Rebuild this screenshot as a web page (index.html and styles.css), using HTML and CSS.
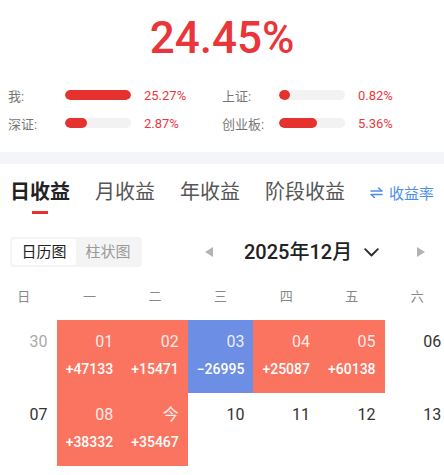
FILE: index.html
```html
<!DOCTYPE html>
<html lang="zh-CN">
<head>
<meta charset="utf-8">
<title>收益</title>
<link rel="stylesheet" href="styles.css">
</head>
<body>
<div class="page">
  <div class="hero">24.45%</div>

  <div class="stats">
    <div class="stat"><span class="stat-label">我:</span><span class="bar"><span class="bar-fill" style="width:100%"></span></span><span class="stat-val">25.27%</span></div>
    <div class="stat"><span class="stat-label">上证:</span><span class="bar"><span class="bar-fill" style="width:16%"></span></span><span class="stat-val">0.82%</span></div>
    <div class="stat"><span class="stat-label">深证:</span><span class="bar"><span class="bar-fill" style="width:34%"></span></span><span class="stat-val">2.87%</span></div>
    <div class="stat"><span class="stat-label">创业板:</span><span class="bar"><span class="bar-fill" style="width:57%"></span></span><span class="stat-val">5.36%</span></div>
  </div>

  <div class="band"></div>

  <div class="tabs">
    <div class="tab active">日收益</div>
    <div class="tab">月收益</div>
    <div class="tab">年收益</div>
    <div class="tab">阶段收益</div>
    <div class="tab-switch">
      <svg class="switch-icon" width="13" height="11" viewBox="0 0 13 11"><path d="M1 4 H12 L8.5 1" fill="none" stroke="#4d8fe6" stroke-width="1.5" stroke-linecap="round" stroke-linejoin="round"/><path d="M12 7.5 H1 L4.5 10.5" fill="none" stroke="#4d8fe6" stroke-width="1.5" stroke-linecap="round" stroke-linejoin="round"/></svg>
      <span>收益率</span>
    </div>
  </div>

  <div class="toolbar">
    <div class="toggle">
      <div class="seg seg-on">日历图</div>
      <div class="seg">柱状图</div>
    </div>
    <div class="month">
      <svg class="arrow arrow-left" width="8" height="10" viewBox="0 0 8 10"><polygon points="8,0 8,10 0,5" fill="#b3b3b3"/></svg>
      <span class="month-text">2025年12月</span>
      <svg class="chev" width="15" height="9" viewBox="0 0 15 9"><polyline points="1.2,1.2 7.5,7.5 13.8,1.2" fill="none" stroke="#2b2b2b" stroke-width="1.9" stroke-linecap="round" stroke-linejoin="round"/></svg>
      <svg class="arrow arrow-right" width="8" height="10" viewBox="0 0 8 10"><polygon points="0,0 0,10 8,5" fill="#b3b3b3"/></svg>
    </div>
  </div>

  <div class="weekdays">
    <div>日</div><div>一</div><div>二</div><div>三</div><div>四</div><div>五</div><div>六</div>
  </div>

  <div class="cal">
    <div class="cell"><div class="num muted">30</div></div>
    <div class="cell up"><div class="num">01</div><div class="val">+47133</div></div>
    <div class="cell up"><div class="num">02</div><div class="val">+15471</div></div>
    <div class="cell down"><div class="num">03</div><div class="val">−26995</div></div>
    <div class="cell up"><div class="num">04</div><div class="val">+25087</div></div>
    <div class="cell up"><div class="num">05</div><div class="val">+60138</div></div>
    <div class="cell"><div class="num">06</div></div>

    <div class="cell"><div class="num">07</div></div>
    <div class="cell up"><div class="num">08</div><div class="val">+38332</div></div>
    <div class="cell up"><div class="num">今</div><div class="val">+35467</div></div>
    <div class="cell"><div class="num">10</div></div>
    <div class="cell"><div class="num">11</div></div>
    <div class="cell"><div class="num">12</div></div>
    <div class="cell"><div class="num">13</div></div>
  </div>
</div>
</body>
</html>
```

FILE: styles.css
```css
* { box-sizing: border-box; }
html, body { margin: 0; padding: 0; background: #fff; }
body {
  font-family: Roboto, "Noto Sans CJK SC", sans-serif;
  width: 444px;
  height: 475px;
  overflow: hidden;
}
.page { width: 444px; overflow: hidden; }

.hero {
  padding-top: 16px;
  font-size: 44px;
  line-height: 44px;
  font-weight: 500;
  color: #e8363b;
  text-align: center;
}

.stats {
  margin-top: 25px;
  padding: 0 0 19px 8px;
  display: grid;
  grid-template-columns: 214px 214px;
  row-gap: 8px;
}
.stat {
  display: flex;
  align-items: center;
  height: 20px;
  font-size: 13px;
  white-space: nowrap;
}
.stat-label {
  width: 57px;
  color: #777;
}
.bar {
  width: 66px;
  height: 10px;
  border-radius: 5px;
  background: #f2f2f3;
  overflow: hidden;
  display: flex;
}
.bar-fill {
  height: 10px;
  min-width: 10px;
  border-radius: 5px;
  background: #e6322f;
}
.stat-val {
  margin-left: 13px;
  color: #e83a3e;
}

.band { height: 12px; background: #f4f5f8; }

.tabs {
  display: flex;
  align-items: flex-start;
  padding: 14px 10px 0 10px;
  gap: 25px;
  white-space: nowrap;
}
.tab {
  flex-shrink: 0;
  display: flex;
  flex-direction: column;
  align-items: center;
  font-size: 20px;
  line-height: 28px;
  color: #555;
}
.tab.active { color: #222; font-weight: 700; }
.tab.active::after {
  content: "";
  display: block;
  width: 16px;
  height: 3px;
  margin-top: 5px;
  background: #e6322f;
}
.tab-switch {
  flex-shrink: 0;
  margin-left: auto;
  display: flex;
  align-items: center;
  gap: 6px;
  height: 28px;
  font-size: 15px;
  color: #4d8fe6;
}
.switch-icon { display: block; }

.toolbar {
  margin-top: 23px;
  padding: 0 10px;
  display: flex;
  align-items: center;
  height: 30px;
}
.toggle {
  display: flex;
  padding: 2px;
  background: #f4f4f4;
  border-radius: 4px;
  width: 132px;
  flex-shrink: 0;
}
.seg {
  width: 64px;
  line-height: 26px;
  text-align: center;
  font-size: 15px;
  color: #999;
  border-radius: 3px;
  white-space: nowrap;
}
.seg-on { background: #fff; color: #222; }

.month {
  flex: 1;
  display: flex;
  align-items: center;
}
.arrow { display: block; }
.arrow-left { margin-left: 63px; }
.month-text {
  margin-left: 31px;
  font-size: 20px;
  font-weight: 500;
  color: #222;
  line-height: 28px;
  white-space: nowrap;
}
.chev { display: block; margin-left: 12px; }
.arrow-right { margin-left: auto; margin-right: 9px; }

.weekdays {
  margin-top: 20px;
  margin-left: -9px;
  display: grid;
  grid-template-columns: repeat(7, 65.6px);
  font-size: 13px;
  line-height: 20px;
  color: #888;
  text-align: center;
}

.cal {
  margin-top: 13px;
  margin-left: -9px;
  display: grid;
  grid-template-columns: repeat(7, 65.6px);
  grid-auto-rows: 73px;
}
.cell {
  padding: 12px 9px 0 0;
  text-align: right;
}
.num {
  font-size: 16px;
  line-height: 20px;
  color: #333;
}
.num.muted { color: #aaa; }
.val {
  margin-top: 8px;
  font-size: 14px;
  line-height: 18px;
  font-weight: 500;
  color: #fff;
  white-space: nowrap;
}
.cell.up { background: #fb7460; }
.cell.down { background: #6d8ee5; }
.cell.up .num, .cell.down .num { color: rgba(255,255,255,0.88); }
```
